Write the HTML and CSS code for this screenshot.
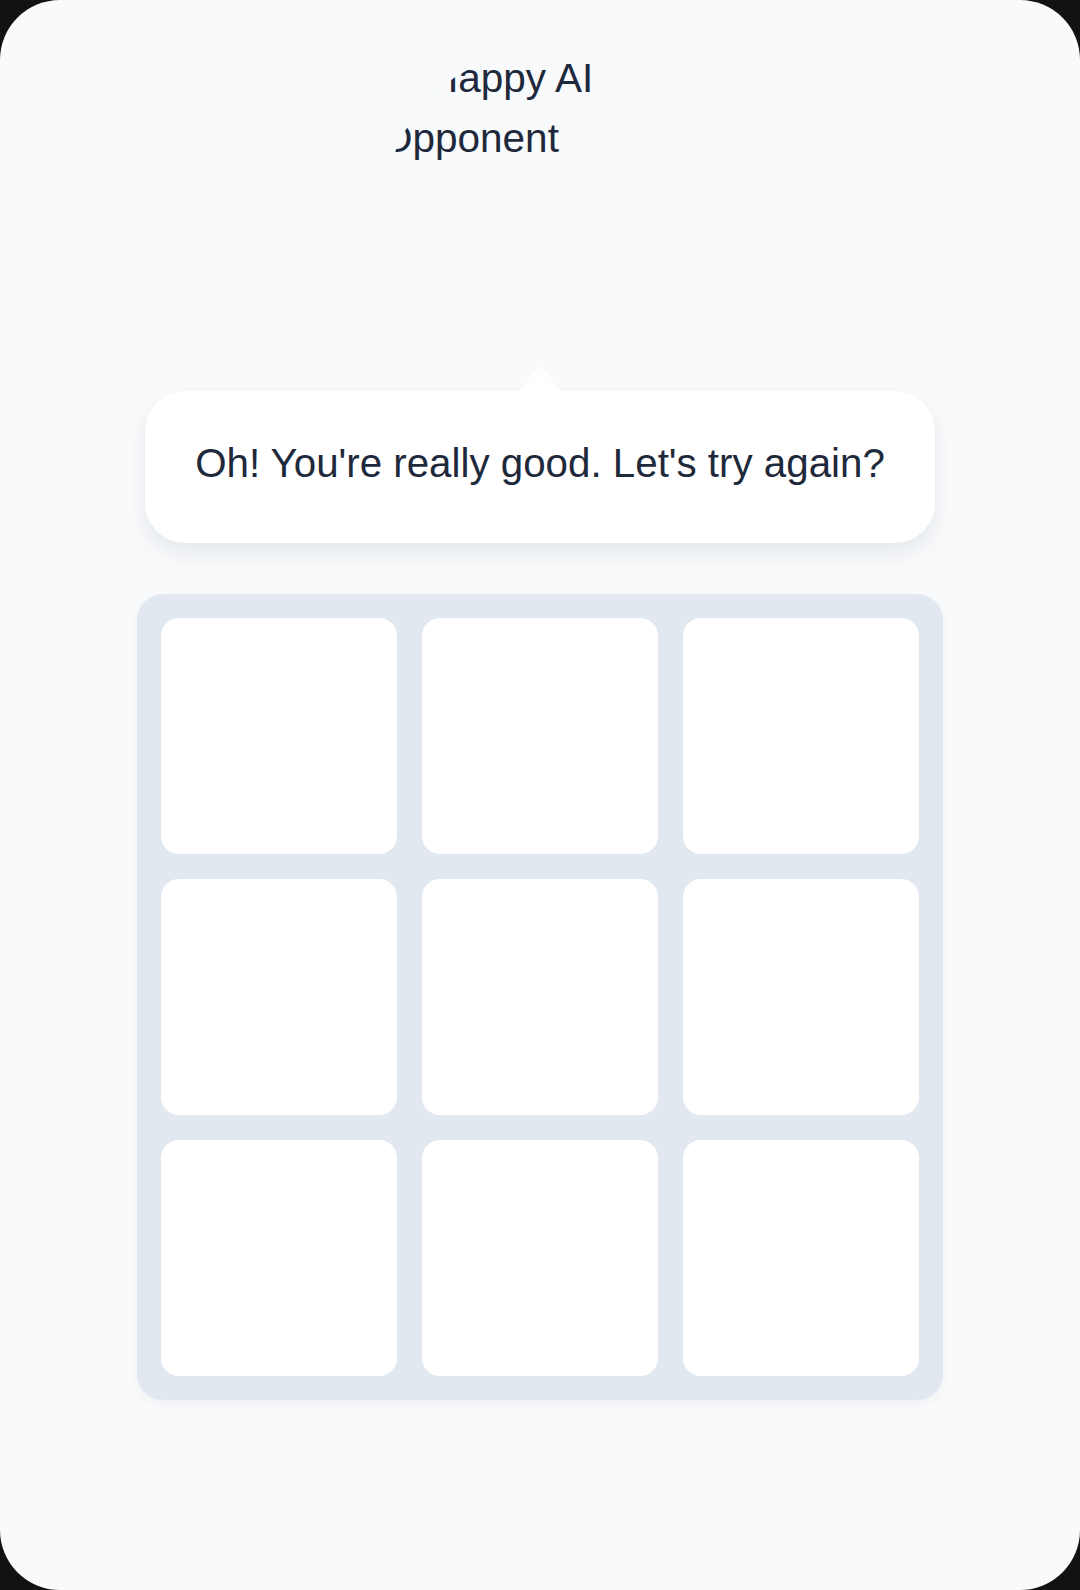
FILE: index.html
```html
<!DOCTYPE html>
<html lang="en">
<head>
    <meta charset="UTF-8">
    <meta name="viewport" content="width=device-width, initial-scale=1.0">
    <title>Tic Tac Toe - Happy AI</title>
    <link rel="stylesheet" href="styles.css">
</head>
<body>
    <div class="screen">
        <!-- AI avatar (image missing, alt text shows through the round frame) -->
        <div class="avatar">
            <p class="avatar-alt">Happy AI Opponent</p>
        </div>

        <!-- Speech bubble from the AI -->
        <div class="bubble">
            <p>Oh! You're really good. Let's try again?</p>
        </div>

        <!-- Game board -->
        <div class="board">
            <button class="cell"></button>
            <button class="cell"></button>
            <button class="cell"></button>
            <button class="cell"></button>
            <button class="cell"></button>
            <button class="cell"></button>
            <button class="cell"></button>
            <button class="cell"></button>
            <button class="cell"></button>
        </div>
    </div>
</body>
</html>
```

FILE: styles.css
```css
/* Page and phone frame */
body {
    margin: 0;
    background: #121212;
    font-family: "Liberation Sans", Arial, sans-serif;
    color: #1e293b;
}

.screen {
    width: 1080px;
    height: 1590px;
    background: #f8fafc;
    border-radius: 60px;
    display: flex;
    flex-direction: column;
    align-items: center;
    overflow: hidden;
}

/* Round avatar frame */
.avatar {
    width: 310px;
    height: 310px;
    margin-top: 52px;
    border-radius: 50%;
    overflow: hidden;
}

.avatar-alt {
    margin: -4px 0 0 -4px;
    width: 222px;
    font-size: 40.5px;
    line-height: 60px;
    text-indent: 48px;
}

/* Speech bubble */
.bubble {
    position: relative;
    width: 790px;
    margin-top: 29px;
    background: #fff;
    border-radius: 40px;
    box-shadow: 0 10px 22px rgba(15, 23, 42, 0.08);
}

.bubble::before {
    content: "";
    position: absolute;
    top: -25px;
    left: 50%;
    margin-left: -22px;
    border-left: 22px solid transparent;
    border-right: 22px solid transparent;
    border-bottom: 26px solid #fff;
}

.bubble p {
    margin: 0;
    padding: 50px 20px 56px;
    font-size: 40.3px;
    line-height: 46px;
    text-align: center;
}

/* Board */
.board {
    width: 806px;
    box-sizing: border-box;
    margin-top: 51px;
    padding: 24px;
    background: #e2e8f0;
    border-radius: 26px;
    display: grid;
    grid-template-columns: repeat(3, 1fr);
    gap: 25px;
    box-shadow: 0 4px 12px rgba(15, 23, 42, 0.04);
}

.cell {
    height: 236px;
    padding: 0;
    border: none;
    background: #fff;
    border-radius: 18px;
    cursor: pointer;
}
```
